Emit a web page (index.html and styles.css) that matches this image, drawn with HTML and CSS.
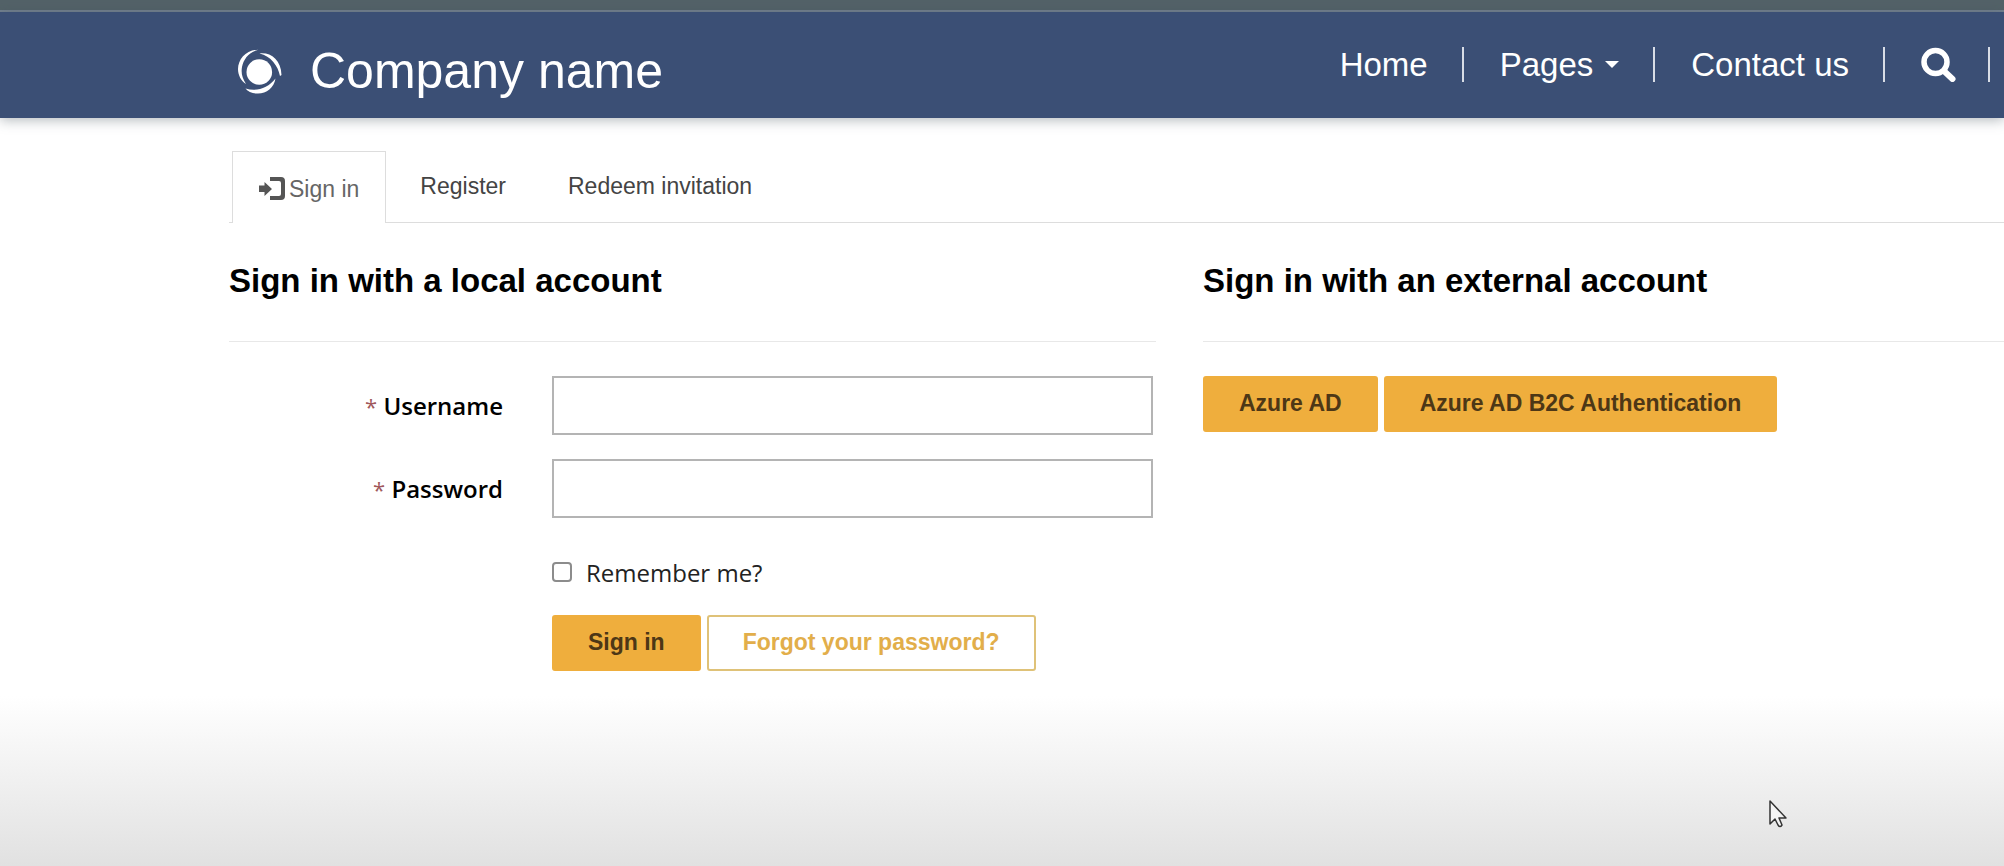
FILE: index.html
```
<!DOCTYPE html>
<html lang="en">
<head>
<meta charset="utf-8">
<title>Sign in</title>
<link rel="stylesheet" href="styles.css">
</head>
<body>
<div class="top-strip"></div>
<header class="site-header">
  <a class="brand" href="#">
    <svg class="brand-logo" viewBox="0 0 45 45" aria-hidden="true">
      <circle cx="22.3" cy="23" r="12.8"/>
      <path d="M21.3.7C9 1 1.300 10 1 20c0 6 3 12 8 15C5 29 4 24 5 18 6.500 10 12 3 21.300.7z"/>
      <path d="M22.500 4.500C33 3 44 10 44.500 26l-1.500 1C41 17 34 7 22.500 4.500z"/>
      <path d="M38.500 29.500C37 39 29 45 20 44.500c-5 0-9-2-11.500-5C20 43 31 39 38.500 29.500z"/>
    </svg>
    <span class="brand-name">Company name</span>
  </a>
  <nav class="main-nav" aria-label="Main">
    <a class="nav-link" href="#">Home</a>
    <a class="nav-link" href="#">Pages <span class="caret"></span></a>
    <a class="nav-link" href="#">Contact us</a>
    <a class="nav-link nav-search" href="#" aria-label="Search">
      <svg class="search-icon" viewBox="0 0 35 35" aria-hidden="true">
        <circle cx="14.500" cy="15" r="11.500" fill="none" stroke="#fff" stroke-width="5.500"/>
        <path d="M23 24l8.500 8" stroke="#fff" stroke-width="6" stroke-linecap="round"/>
      </svg>
    </a>
  </nav>
</header>

<main class="page">
  <nav class="tabs" aria-label="Account">
    <a class="tab tab-active" href="#" aria-current="page">
      <svg class="tab-icon" viewBox="0 0 26 24" aria-hidden="true">
        <path d="M0 8.500h5.500V5l7.500 7-7.500 7v-4H0z"/>
        <path d="M11 0h11q4 0 4 4v15q0 4-4 4H11v-4h9q2 0 2-2V6q0-2-2-2h-9z"/>
      </svg><span>Sign in</span></a>
    <a class="tab" href="#">Register</a>
    <a class="tab" href="#">Redeem invitation</a>
  </nav>

  <div class="columns">
    <section>
      <h2 class="section-title">Sign in with a local account</h2>
      <form class="login-form">
        <label class="field-label" for="username"><span class="required">*</span> Username</label>
        <input class="field-input" id="username" type="text">
        <label class="field-label" for="password"><span class="required">*</span> Password</label>
        <input class="field-input" id="password" type="password">
        <div class="remember">
          <input class="remember-box" id="remember" type="checkbox">
          <label for="remember">Remember me?</label>
        </div>
        <div class="actions">
          <button class="button" type="button">Sign in</button>
          <a class="button button-outline" href="#">Forgot your password?</a>
        </div>
      </form>
    </section>
    <section>
      <h2 class="section-title">Sign in with an external account</h2>
      <div class="actions">
        <button class="button" type="button">Azure AD</button>
        <button class="button" type="button">Azure AD B2C Authentication</button>
      </div>
    </section>
  </div>
</main>

<svg class="pointer" viewBox="0 0 18 28" aria-hidden="true">
  <path d="M1 1v23l5-5 3 6q2 3 4 0l-3-7h7z" fill="#f4f4f4" stroke="#333" stroke-width="1.500" stroke-linejoin="round"/>
</svg>
</body>
</html>
```
FILE: styles.css
```
* {
  box-sizing: border-box;
}

body {
  margin: 0;
  min-height: 100vh;
  overflow-x: hidden;
  position: relative;
  font-family: "Liberation Sans", Arial, sans-serif;
  font-size: 24px;
  color: #222;
  background: linear-gradient(to top, #e1e1e1 0, #fff 170px) no-repeat #fff;
}

a {
  color: inherit;
  text-decoration: none;
}

.top-strip {
  height: 12px;
  background: #536268;
  border-bottom: 2px solid #72808f;
}

.site-header {
  display: flex;
  justify-content: space-between;
  align-items: flex-start;
  height: 106px;
  padding: 35px 14px 0 237px;
  color: #fff;
  background: #3b4f75;
  box-shadow: 0 2px 12px rgba(60, 75, 85, 0.4);
}

.brand {
  display: flex;
  align-items: center;
  gap: 28px;
}

.brand-logo {
  width: 45px;
  height: 45px;
  fill: #fff;
}

.brand-name {
  font-size: 50px;
  line-height: 48px;
}

.main-nav {
  display: flex;
}

.nav-link {
  display: flex;
  align-items: center;
  height: 35px;
  padding: 0 34px 0 36px;
  font-size: 33px;
  border-right: 2px solid #d8dde6;
}

.nav-search {
  padding-right: 32px;
}

.caret {
  margin-left: 12px;
  border: 7px solid transparent;
  border-top-color: #fff;
  border-bottom: 0;
}

.search-icon {
  width: 35px;
  height: 35px;
}

.page {
  padding: 33px 0 0 229px;
}

.tabs {
  display: flex;
  align-items: stretch;
  padding-left: 3px;
  font-size: 23px;
  border-bottom: 1px solid #ddd;
}

.tab {
  display: flex;
  align-items: center;
  height: 71px;
  padding: 0 31px 2px;
  line-height: 28px;
  color: #444;
}

.tab-active {
  gap: 4px;
  height: 72px;
  margin: 0 3px -1px 0;
  padding: 2px 26px 0;
  color: #666;
  border: 1px solid #ddd;
  border-bottom: 0;
  background: #fff;
}

.tab-icon {
  width: 26px;
  height: 24px;
  fill: #555;
}

.columns {
  display: grid;
  grid-template-columns: minmax(0, 927fr) minmax(0, 801fr);
  column-gap: 47px;
  padding-top: 37px;
}

.section-title {
  margin: 0 0 34px;
  padding-bottom: 40px;
  font-size: 33px;
  line-height: 41px;
  color: #000;
  border-bottom: 1px solid #e8e8e8;
}

.login-form {
  display: grid;
  grid-template-columns: 274px minmax(0, 1fr);
  gap: 24px 49px;
  align-items: center;
  padding-right: 3px;
  font-family: "Open Sans", "Noto Sans", sans-serif;
}

.field-label {
  text-align: right;
  font-weight: 600;
  color: #000;
}

.required {
  font-size: 22px;
  font-weight: 400;
  color: #a0585c;
}

.field-input {
  width: 100%;
  height: 59px;
  padding: 0 16px;
  font: inherit;
  border: 2px solid #b4b4b4;
  background: #fff;
}

.remember {
  grid-column: 2;
  display: flex;
  align-items: center;
  gap: 14px;
  height: 60px;
}

.remember-box {
  appearance: none;
  width: 20px;
  height: 20px;
  margin: 0;
  border: 2px solid #8c8c8c;
  border-radius: 4px;
  background: #fff;
}

.login-form .actions {
  grid-column: 2;
  margin-top: -11px;
}

.actions {
  display: flex;
  gap: 6px;
}

.button {
  height: 56px;
  padding: 0 34px 2px;
  font: bold 23px/50px "Liberation Sans", Arial, sans-serif;
  color: #4d3716;
  background: #efae3d;
  border: 2px solid #efae3d;
  border-radius: 3px;
}

.button-outline {
  color: #e2ae4a;
  background: #fff;
  border-color: #dfc278;
}

.pointer {
  position: absolute;
  left: 1769px;
  top: 800px;
  width: 18px;
  height: 28px;
}
```
